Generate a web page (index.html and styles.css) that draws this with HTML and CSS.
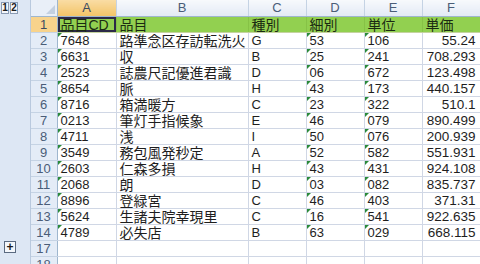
FILE: index.html
```html
<!DOCTYPE html>
<html lang="ja">

<head>
    <meta charset="UTF-8">
    <title>Sheet1</title>
    <link rel="stylesheet" href="styles.css">
</head>

<body>

    <table class="sheet">
        <colgroup>
            <col class="c-outline">
            <col class="c-rowhead">
            <col class="c-a">
            <col class="c-b">
            <col class="c-std">
            <col class="c-std">
            <col class="c-std">
            <col class="c-std">
        </colgroup>
        <thead>
            <tr>
                <th class="outline">
                    <div class="levels"><span class="lvl">1</span><span class="lvl">2</span></div>
                </th>
                <th class="corner"><span class="select-all"></span></th>
                <th class="colhead active">A</th>
                <th class="colhead">B</th>
                <th class="colhead">C</th>
                <th class="colhead">D</th>
                <th class="colhead">E</th>
                <th class="colhead">F</th>
            </tr>
        </thead>
        <tbody id="sheet-body"></tbody>
    </table>

    <script>
        // rows of the sheet (rows 15-16 are grouped and collapsed)
        const rows = [
            ["7648", "路準念区存訪転洗火", "G", "53", "106", "55.24"],
            ["6631", "収", "B", "25", "241", "708.293"],
            ["2523", "誌農尺記優進君識", "D", "06", "672", "123.498"],
            ["8654", "脈", "H", "43", "173", "440.157"],
            ["8716", "箱満暖方", "C", "23", "322", "510.1"],
            ["0213", "筆灯手指候象", "E", "46", "079", "890.499"],
            ["4711", "浅", "I", "50", "076", "200.939"],
            ["3549", "務包風発秒定", "A", "52", "582", "551.931"],
            ["2603", "仁森多損", "H", "43", "431", "924.108"],
            ["2068", "朗", "D", "03", "082", "835.737"],
            ["8896", "登緑宮", "C", "46", "403", "371.31"],
            ["5624", "生諸夫院幸現里", "C", "16", "541", "922.635"],
            ["4789", "必失店", "B", "63", "029", "668.115"]
        ];

        const tbody = document.getElementById('sheet-body');

        // header row (row 1)
        tbody.insertAdjacentHTML('beforeend', `
            <tr class="title-row">
                <td class="outline"></td>
                <th class="rowhead active">1</th>
                <td class="cell selected">品目CD</td>
                <td class="cell">品目</td>
                <td class="cell">種別</td>
                <td class="cell">細別</td>
                <td class="cell">単位</td>
                <td class="cell">単価</td>
            </tr>
        `);

        rows.forEach((r, i) => {
            tbody.insertAdjacentHTML('beforeend', `
                <tr>
                    <td class="outline"></td>
                    <th class="rowhead">${i + 2}</th>
                    <td class="cell text">${r[0]}</td>
                    <td class="cell jp">${r[1]}</td>
                    <td class="cell">${r[2]}</td>
                    <td class="cell text">${r[3]}</td>
                    <td class="cell text">${r[4]}</td>
                    <td class="cell num">${r[5]}</td>
                </tr>
            `);
        });

        // collapsed group button row and the next empty row
        [17, 18].forEach(n => {
            const btn = n === 17 ? '<span class="expand">+</span>' : '';
            tbody.insertAdjacentHTML('beforeend', `
                <tr>
                    <td class="outline">${btn}</td>
                    <th class="rowhead">${n}</th>
                    <td class="cell"></td>
                    <td class="cell"></td>
                    <td class="cell"></td>
                    <td class="cell"></td>
                    <td class="cell"></td>
                    <td class="cell"></td>
                </tr>
            `);
        });
    </script>

</body>

</html>
```

FILE: styles.css
```css
body {
    margin: 0;
    background-color: #ffffff;
    font-family: "Liberation Sans", "Noto Sans CJK JP", sans-serif;
    overflow: hidden;
}

.sheet {
    border-collapse: collapse;
    table-layout: fixed;
    width: 480px;
    font-size: 13px;
    color: #1e1e1e;
}

.c-outline { width: 30px; }
.c-rowhead { width: 27px; }
.c-a { width: 59px; }
.c-b { width: 132px; }
.c-std { width: 58px; }

.sheet tr {
    height: 16px;
}

.sheet th,
.sheet td {
    box-sizing: border-box;
    height: 16px;
    padding: 1px 0 0 0;
    line-height: 14px;
    white-space: nowrap;
    overflow: hidden;
}

/* outline (grouping) pane */
.outline {
    background-color: #dde7f4;
    border: none;
    border-right: 1px solid #b9c9de;
    vertical-align: top;
}

.sheet .outline {
    padding: 0;
}

.levels {
    display: flex;
    gap: 1px;
    padding: 2px 0 0 1px;
}

.lvl,
.expand {
    display: flex;
    align-items: center;
    justify-content: center;
    box-sizing: border-box;
    width: 8px;
    height: 12px;
    border: 1px solid #8a9bb3;
    background-color: #f4f7fb;
    font-size: 10px;
    font-weight: bold;
    line-height: 10px;
    color: #1b1b1b;
}

.expand {
    width: 12px;
    height: 12px;
    margin: 1px 0 0 4px;
    border-color: #5a6a80;
    font-size: 12px;
}

/* headers */
.corner {
    background-color: #e9eff8;
    border-right: 1px solid #9eb6ce;
    border-bottom: 1px solid #9eb6ce;
    position: relative;
}

.select-all {
    position: absolute;
    right: 2px;
    bottom: 2px;
    width: 0;
    height: 0;
    border-left: 9px solid transparent;
    border-bottom: 9px solid #c3d0e1;
}

.colhead {
    background: linear-gradient(#f7f9fc, #e3eaf5);
    border-right: 1px solid #c5d3e4;
    border-bottom: 1px solid #9eb6ce;
    font-weight: normal;
    font-size: 13px;
    color: #4a5d78;
    text-align: center;
}

.rowhead {
    background-color: #e4ecf7;
    border-right: 1px solid #9eb6ce;
    border-bottom: 1px solid #c5d3e4;
    font-weight: normal;
    font-size: 13px;
    color: #4a5d78;
    text-align: center;
}

.colhead.active {
    background: linear-gradient(#f9dca4, #f2c468);
    color: #3b4a60;
}

.rowhead.active {
    background-color: #f8d38c;
    color: #3b4a60;
}

/* cells */
.cell {
    border-right: 1px solid #d0d7e5;
    border-bottom: 1px solid #d0d7e5;
    padding-left: 3px !important;
    position: relative;
}

.jp {
    font-size: 14px;
}

.num {
    text-align: right;
    padding-right: 4px !important;
    font-size: 13.5px;
}

/* numbers stored as text get the green corner mark */
.text::before {
    content: "";
    position: absolute;
    left: 0;
    top: 0;
    width: 0;
    height: 0;
    border-top: 4px solid #2a8a3a;
    border-right: 4px solid transparent;
}

.title-row .cell {
    background-color: #92d050;
    border-right-color: #86c246;
    border-bottom-color: #c5d3a0;
    font-size: 14px;
    color: #1a2a12;
}

.title-row .cell.selected {
    box-shadow: inset 0 0 0 2px #2c2a48;
}
```
